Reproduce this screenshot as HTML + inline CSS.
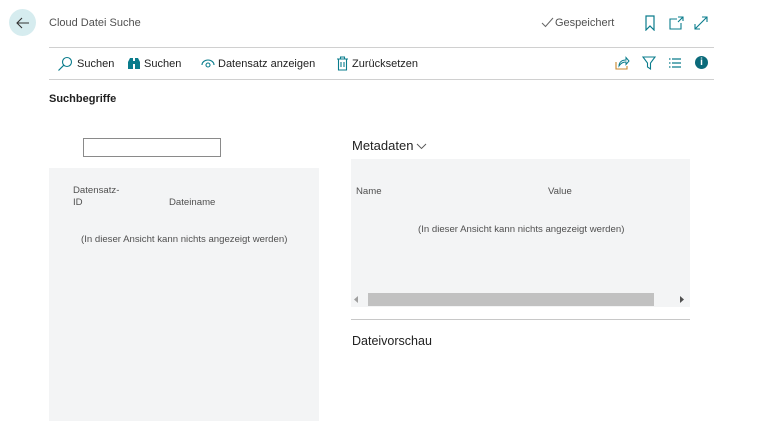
<!DOCTYPE html>
<html><head><meta charset="utf-8"><style>
*{margin:0;padding:0;box-sizing:border-box}
body{width:765px;height:421px;background:#fff;font-family:"Segoe UI","Liberation Sans",sans-serif;color:#212121;position:relative;overflow:hidden}
.a{position:absolute;white-space:nowrap}
.t{font-size:11px}
.s{font-size:9.6px;color:#505050}
svg{position:absolute}
</style></head><body>
<div class="a" style="left:9px;top:9px;width:27px;height:27px;border-radius:50%;background:#d6ecef"></div>
<svg style="left:13px;top:13px" width="20" height="20" viewBox="0 0 20 20"><path d="M16 10H4M9 5L4 10L9 15" fill="none" stroke="#333" stroke-width="1.1"/></svg>
<div class="a" style="left:49px;top:17px;font-size:11px;color:#505050">Cloud Datei Suche</div>
<svg style="left:541px;top:17px" width="13" height="11" viewBox="0 0 13 11"><path d="M1 6L4.5 9.5L12 1" fill="none" stroke="#666" stroke-width="1"/></svg>
<div class="a" style="left:555px;top:17px;font-size:11px;color:#505050">Gespeichert</div>
<svg style="left:643px;top:15px" width="14" height="16" viewBox="0 0 14 16"><path d="M3 1H11V15L7 11L3 15Z" fill="none" stroke="#0a7c8c" stroke-width="1.2"/></svg>
<svg style="left:668px;top:15px" width="16" height="16" viewBox="0 0 16 16"><path d="M9 4H2V14H13V8M10 2H15V6M15 2L10 7" fill="none" stroke="#0a7c8c" stroke-width="1.1"/></svg>
<svg style="left:693px;top:15px" width="16" height="16" viewBox="0 0 16 16"><path d="M2 14L14 2M9 2H14V7M2 9V14H7" fill="none" stroke="#0a7c8c" stroke-width="1.1"/></svg>
<div class="a" style="left:49px;top:47px;width:665px;height:1px;background:#d0d0d0"></div>
<div class="a" style="left:49px;top:79px;width:665px;height:1px;background:#d0d0d0"></div>
<svg style="left:57px;top:56px" width="16" height="16" viewBox="0 0 16 16"><circle cx="10" cy="6" r="4.5" fill="none" stroke="#0a7c8c" stroke-width="1.1"/><path d="M6.8 9.2L1.5 14.5" stroke="#0a7c8c" stroke-width="1.2"/></svg>
<div class="a t" style="left:77px;top:58px">Suchen</div>
<svg style="left:127px;top:57px" width="14" height="13" viewBox="0 0 14 13"><path d="M1 12V5L3 1H6V12ZM8 12V1H11L13 5V12Z" fill="#0a7c8c"/><rect x="5" y="4" width="4" height="3" fill="#0a7c8c"/></svg>
<div class="a t" style="left:144px;top:58px">Suchen</div>
<svg style="left:201px;top:57px" width="14" height="12" viewBox="0 0 14 12"><path d="M1 8A6 5 0 0 1 13 8" fill="none" stroke="#0a7c8c" stroke-width="1.1"/><circle cx="7" cy="8" r="2" fill="none" stroke="#0a7c8c" stroke-width="1.1"/></svg>
<div class="a t" style="left:218px;top:58px">Datensatz anzeigen</div>
<svg style="left:336px;top:56px" width="13" height="15" viewBox="0 0 13 15"><path d="M1 3H12M4.5 3V1H8.5V3M2.5 3V14H10.5V3M5 6V11M8 6V11" fill="none" stroke="#0a7c8c" stroke-width="1.1"/></svg>
<div class="a t" style="left:352px;top:58px">Zurücksetzen</div>
<svg style="left:615px;top:56px" width="15" height="14" viewBox="0 0 15 14"><path d="M1 6V13H12V10" fill="none" stroke="#c8862c" stroke-width="1.1"/><path d="M4 10C4 6 7 4 11 4V1.5L14 5L11 8.5V6C8 6 5.5 7.5 4 10Z" fill="none" stroke="#0a7c8c" stroke-width="1"/></svg>
<svg style="left:642px;top:56px" width="14" height="14" viewBox="0 0 14 14"><path d="M1 1H13L8.5 7V13L5.5 11V7Z" fill="none" stroke="#0a7c8c" stroke-width="1.1"/></svg>
<svg style="left:668px;top:58px" width="14" height="10" viewBox="0 0 14 10"><path d="M1 1H2.5M4 1H13M1 5H2.5M4 5H13M1 9H2.5M4 9H13" stroke="#0a7c8c" stroke-width="1.2"/></svg>
<div class="a" style="left:695px;top:56px;width:13px;height:13px;border-radius:50%;background:#0b6a7a;color:#fff;font-size:10px;font-weight:bold;text-align:center;line-height:13px">i</div>
<div class="a" style="left:49px;top:93px;font-size:11px;font-weight:bold">Suchbegriffe</div>
<div class="a" style="left:83px;top:138px;width:138px;height:19px;border:1px solid #8a8a8a"></div>
<div class="a" style="left:49px;top:168px;width:270px;height:253px;background:#f3f4f5"></div>
<div class="a s" style="left:73px;top:185px;line-height:12px">Datensatz-<br>ID</div>
<div class="a s" style="left:169px;top:197px">Dateiname</div>
<div class="a s" style="left:81px;top:234px">(In dieser Ansicht kann nichts angezeigt werden)</div>
<div class="a" style="left:352px;top:138px;font-size:13px">Metadaten</div>
<svg style="left:416px;top:143px" width="11" height="7" viewBox="0 0 11 7"><path d="M1 1L5.5 5.5L10 1" fill="none" stroke="#555" stroke-width="0.9"/></svg>
<div class="a" style="left:351px;top:159px;width:339px;height:148px;background:#f3f4f5"></div>
<div class="a s" style="left:356px;top:186px">Name</div>
<div class="a s" style="left:548px;top:186px">Value</div>
<div class="a s" style="left:418px;top:224px">(In dieser Ansicht kann nichts angezeigt werden)</div>
<div class="a" style="left:368px;top:293px;width:286px;height:13px;background:#c1c1c1"></div>
<svg style="left:354px;top:296px" width="5" height="7" viewBox="0 0 5 7"><path d="M4 0V7L0 3.5Z" fill="#a0a0a0"/></svg>
<svg style="left:680px;top:296px" width="5" height="7" viewBox="0 0 5 7"><path d="M0 0V7L4 3.5Z" fill="#505050"/></svg>
<div class="a" style="left:351px;top:319px;width:339px;height:1px;background:#c8c8c8"></div>
<div class="a" style="left:352px;top:334px;font-size:12.5px">Dateivorschau</div>
</body></html>
